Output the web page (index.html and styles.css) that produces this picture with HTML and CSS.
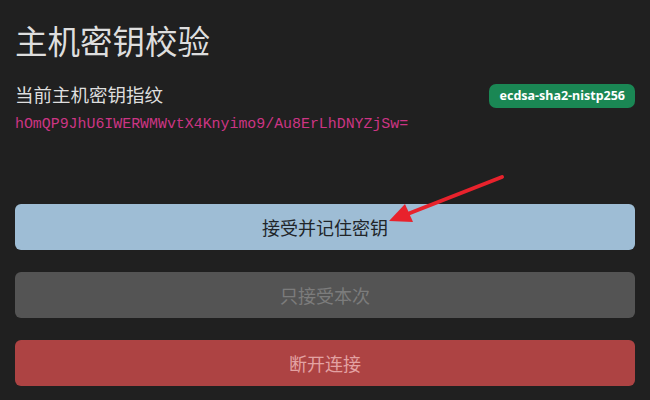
FILE: index.html
```html
<!DOCTYPE html>
<html lang="zh-CN">
<head>
    <meta charset="UTF-8">
    <meta name="viewport" content="width=device-width, initial-scale=1.0">
    <title>主机密钥校验</title>
    <link rel="stylesheet" href="styles.css">
</head>
<body>
    <div class="dialog">
        <h1 class="dialog-title">主机密钥校验</h1>

        <!-- Fingerprint info -->
        <div class="key-row">
            <div class="key-info">
                <div class="key-label">当前主机密钥指纹</div>
                <code class="fingerprint">hOmQP9JhU6IWERWMWvtX4Knyimo9/Au8ErLhDNYZjSw=</code>
            </div>
            <span class="badge">ecdsa-sha2-nistp256</span>
        </div>

        <!-- Actions -->
        <div class="actions">
            <button class="btn btn-accept">接受并记住密钥</button>
            <button class="btn btn-once" disabled>只接受本次</button>
            <button class="btn btn-disconnect" disabled>断开连接</button>
        </div>

        <!-- Annotation arrow -->
        <svg class="arrow" width="650" height="400" viewBox="0 0 650 400">
            <line x1="502" y1="177" x2="405" y2="215" stroke="#e8222c" stroke-width="4" stroke-linecap="round"/>
            <polygon points="389,221 413,222 405,204" fill="#e8222c"/>
        </svg>
    </div>
</body>
</html>
```

FILE: styles.css
```css
:root {
    --bg: #202020;
    --text: #dedede;
    --accent: #9ebdd5;
    --danger: #ad4343;
}

body {
    margin: 0;
    padding: 0;
    background-color: var(--bg);
    color: var(--text);
    font-family: 'Noto Sans', 'Noto Sans CJK SC', sans-serif;
}

.dialog {
    position: relative;
    padding: 0 15px;
    height: 400px;
    overflow: hidden;
}

.dialog-title {
    margin: 22px 0 0;
    font-size: 32.5px;
    font-weight: 400;
    line-height: 1.2;
}

.key-row {
    display: flex;
    justify-content: space-between;
    align-items: flex-start;
    margin-top: 20px;
}

.key-label {
    font-size: 18.5px;
    line-height: 1.5;
}

.fingerprint {
    display: block;
    margin-top: 4px;
    font-family: 'Liberation Mono', monospace;
    font-size: 14.9px;
    line-height: 1.5;
    color: #cc3584;
}

.badge {
    margin-top: 3px;
    padding: 0 10px;
    height: 24px;
    line-height: 24px;
    border-radius: 7px;
    background-color: #1a8754;
    color: #fff;
    font-size: 12.5px;
    font-weight: 700;
}

.actions {
    display: flex;
    flex-direction: column;
    gap: 22px;
    margin-top: 69px;
}

.btn {
    height: 46px;
    border: none;
    border-radius: 6px;
    font-family: 'Noto Sans CJK SC', sans-serif;
    font-size: 18px;
}

.btn-accept {
    background-color: var(--accent);
    color: #212529;
}

.btn-once {
    background-color: #545454;
    color: #7c7c7c;
}

.btn-disconnect {
    background-color: var(--danger);
    color: #e3a2a2;
}

.arrow {
    position: absolute;
    top: 0;
    left: 0;
    pointer-events: none;
}
```
